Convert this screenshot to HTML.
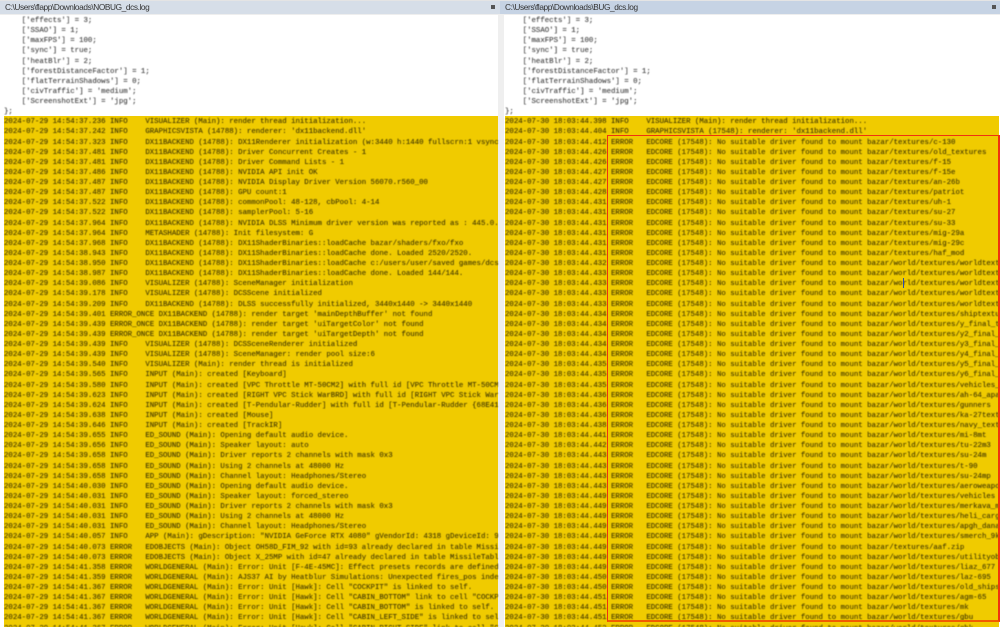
<!DOCTYPE html>
<html><head><meta charset="utf-8"><style>
html,body{margin:0;padding:0;background:#fff;width:1000px;height:627px;overflow:hidden}
.a{position:absolute}
.tb{top:1px;height:13px;font:8.3px/13px "Liberation Sans",sans-serif;letter-spacing:-.4px;color:#333;white-space:pre;padding-left:5px;box-sizing:border-box}
pre{position:absolute;margin:0;top:14px;padding-top:2px;font:7.37px/10.13px "Liberation Mono",monospace;color:#3d3400;-webkit-text-stroke:.1px #3d3400;overflow:hidden;height:611px;filter:blur(.4px)}
.w{color:#3a3a3a;-webkit-text-stroke:.1px #3a3a3a}
</style></head><body>
<div class="a" style="left:0;top:0;width:1000px;height:1px;background:#e4e4e4"></div>
<div class="a tb" style="left:0;width:500px;background:#d6dee8">C:\Users\flapp\Downloads\NOBUG_dcs.log</div>
<div class="a tb" style="left:500px;width:500px;background:#c6d3e4">C:\Users\flapp\Downloads\BUG_dcs.log</div>
<div class="a" style="left:491px;top:5px;width:4px;height:4px;background:#555"></div>
<div class="a" style="left:992px;top:5px;width:4px;height:4px;background:#555"></div>
<div class="a" style="left:498px;top:14px;width:6px;height:613px;background:#efefef"></div>
<div class="a" style="left:0;top:14px;width:1000px;height:1px;background:#eee"></div>
<div class="a" style="left:4px;top:116px;width:494px;height:511px;background:#f0cb00"></div>
<div class="a" style="left:505px;top:116px;width:494px;height:511px;background:#f0cb00"></div>
<pre style="left:4px;width:494px"><span class="w">    ['effects'] = 3;
    ['SSAO'] = 1;
    ['maxFPS'] = 100;
    ['sync'] = true;
    ['heatBlr'] = 2;
    ['forestDistanceFactor'] = 1;
    ['flatTerrainShadows'] = 0;
    ['civTraffic'] = 'medium';
    ['ScreenshotExt'] = 'jpg';
};</span>
2024-07-29 14:54:37.236 INFO    VISUALIZER (Main): render thread initialization...
2024-07-29 14:54:37.242 INFO    GRAPHICSVISTA (14788): renderer: 'dx11backend.dll'
2024-07-29 14:54:37.323 INFO    DX11BACKEND (14788): DX11Renderer initialization (w:3440 h:1440 fullscrn:1 vsync:0
2024-07-29 14:54:37.481 INFO    DX11BACKEND (14788): Driver Concurrent Creates - 1
2024-07-29 14:54:37.481 INFO    DX11BACKEND (14788): Driver Command Lists - 1
2024-07-29 14:54:37.486 INFO    DX11BACKEND (14788): NVIDIA API init OK
2024-07-29 14:54:37.487 INFO    DX11BACKEND (14788): NVIDIA Display Driver Version 56070.r560_00
2024-07-29 14:54:37.487 INFO    DX11BACKEND (14788): GPU count:1
2024-07-29 14:54:37.522 INFO    DX11BACKEND (14788): commonPool: 48-128, cbPool: 4-14
2024-07-29 14:54:37.522 INFO    DX11BACKEND (14788): samplerPool: 5-16
2024-07-29 14:54:37.964 INFO    DX11BACKEND (14788): NVIDIA DLSS Minimum driver version was reported as : 445.0.0
2024-07-29 14:54:37.964 INFO    METASHADER (14788): Init filesystem: G
2024-07-29 14:54:37.968 INFO    DX11BACKEND (14788): DX11ShaderBinaries::loadCache bazar/shaders/fxo/fxo
2024-07-29 14:54:38.943 INFO    DX11BACKEND (14788): DX11ShaderBinaries::loadCache done. Loaded 2520/2520.
2024-07-29 14:54:38.950 INFO    DX11BACKEND (14788): DX11ShaderBinaries::loadCache c:/users/user/saved games/dcs/fxo
2024-07-29 14:54:38.987 INFO    DX11BACKEND (14788): DX11ShaderBinaries::loadCache done. Loaded 144/144.
2024-07-29 14:54:39.086 INFO    VISUALIZER (14788): SceneManager initialization
2024-07-29 14:54:39.178 INFO    VISUALIZER (14788): DCSScene initialized
2024-07-29 14:54:39.209 INFO    DX11BACKEND (14788): DLSS successfully initialized, 3440x1440 -> 3440x1440
2024-07-29 14:54:39.401 ERROR_ONCE DX11BACKEND (14788): render target 'mainDepthBuffer' not found
2024-07-29 14:54:39.439 ERROR_ONCE DX11BACKEND (14788): render target 'uiTargetColor' not found
2024-07-29 14:54:39.439 ERROR_ONCE DX11BACKEND (14788): render target 'uiTargetDepth' not found
2024-07-29 14:54:39.439 INFO    VISUALIZER (14788): DCSSceneRenderer initialized
2024-07-29 14:54:39.439 INFO    VISUALIZER (14788): SceneManager: render pool size:6
2024-07-29 14:54:39.540 INFO    VISUALIZER (Main): render thread is initialized
2024-07-29 14:54:39.565 INFO    INPUT (Main): created [Keyboard]
2024-07-29 14:54:39.580 INFO    INPUT (Main): created [VPC Throttle MT-50CM2] with full id [VPC Throttle MT-50CM2 {
2024-07-29 14:54:39.623 INFO    INPUT (Main): created [RIGHT VPC Stick WarBRD] with full id [RIGHT VPC Stick WarBRD {
2024-07-29 14:54:39.624 INFO    INPUT (Main): created [T-Pendular-Rudder] with full id [T-Pendular-Rudder {68E41
2024-07-29 14:54:39.638 INFO    INPUT (Main): created [Mouse]
2024-07-29 14:54:39.646 INFO    INPUT (Main): created [TrackIR]
2024-07-29 14:54:39.655 INFO    ED_SOUND (Main): Opening default audio device.
2024-07-29 14:54:39.656 INFO    ED_SOUND (Main): Speaker layout: auto
2024-07-29 14:54:39.658 INFO    ED_SOUND (Main): Driver reports 2 channels with mask 0x3
2024-07-29 14:54:39.658 INFO    ED_SOUND (Main): Using 2 channels at 48000 Hz
2024-07-29 14:54:39.658 INFO    ED_SOUND (Main): Channel layout: Headphones/Stereo
2024-07-29 14:54:40.030 INFO    ED_SOUND (Main): Opening default audio device.
2024-07-29 14:54:40.031 INFO    ED_SOUND (Main): Speaker layout: forced_stereo
2024-07-29 14:54:40.031 INFO    ED_SOUND (Main): Driver reports 2 channels with mask 0x3
2024-07-29 14:54:40.031 INFO    ED_SOUND (Main): Using 2 channels at 48000 Hz
2024-07-29 14:54:40.031 INFO    ED_SOUND (Main): Channel layout: Headphones/Stereo
2024-07-29 14:54:40.057 INFO    APP (Main): gDescription: "NVIDIA GeForce RTX 4080" gVendorId: 4318 gDeviceId: 9
2024-07-29 14:54:40.073 ERROR   EDOBJECTS (Main): Object OH58D_FIM_92 with id=93 already declared in table MissileTable
2024-07-29 14:54:40.073 ERROR   EDOBJECTS (Main): Object X_25MP with id=47 already declared in table MissileTable
2024-07-29 14:54:41.358 ERROR   WORLDGENERAL (Main): Error: Unit [F-4E-45MC]: Effect presets records are defined
2024-07-29 14:54:41.359 ERROR   WORLDGENERAL (Main): AJS37 AI by Heatblur Simulations: Unexpected fires_pos index
2024-07-29 14:54:41.367 ERROR   WORLDGENERAL (Main): Error: Unit [Hawk]: Cell "COCKPIT" is linked to self.
2024-07-29 14:54:41.367 ERROR   WORLDGENERAL (Main): Error: Unit [Hawk]: Cell "CABIN_BOTTOM" link to cell "COCKPIT"
2024-07-29 14:54:41.367 ERROR   WORLDGENERAL (Main): Error: Unit [Hawk]: Cell "CABIN_BOTTOM" is linked to self.
2024-07-29 14:54:41.367 ERROR   WORLDGENERAL (Main): Error: Unit [Hawk]: Cell "CABIN_LEFT_SIDE" is linked to self.
2024-07-29 14:54:41.367 ERROR   WORLDGENERAL (Main): Error: Unit [Hawk]: Cell "CABIN_RIGHT_SIDE" link to cell "COCKPIT"</pre>
<pre style="left:505px;width:494px"><span class="w">    ['effects'] = 3;
    ['SSAO'] = 1;
    ['maxFPS'] = 100;
    ['sync'] = true;
    ['heatBlr'] = 2;
    ['forestDistanceFactor'] = 1;
    ['flatTerrainShadows'] = 0;
    ['civTraffic'] = 'medium';
    ['ScreenshotExt'] = 'jpg';
};</span>
2024-07-30 18:03:44.398 INFO    VISUALIZER (Main): render thread initialization...
2024-07-30 18:03:44.404 INFO    GRAPHICSVISTA (17548): renderer: 'dx11backend.dll'
2024-07-30 18:03:44.412 ERROR   EDCORE (17548): No suitable driver found to mount bazar/textures/c-130
2024-07-30 18:03:44.426 ERROR   EDCORE (17548): No suitable driver found to mount bazar/textures/old_textures
2024-07-30 18:03:44.426 ERROR   EDCORE (17548): No suitable driver found to mount bazar/textures/f-15
2024-07-30 18:03:44.427 ERROR   EDCORE (17548): No suitable driver found to mount bazar/textures/f-15e
2024-07-30 18:03:44.427 ERROR   EDCORE (17548): No suitable driver found to mount bazar/textures/an-26b
2024-07-30 18:03:44.428 ERROR   EDCORE (17548): No suitable driver found to mount bazar/textures/patriot
2024-07-30 18:03:44.431 ERROR   EDCORE (17548): No suitable driver found to mount bazar/textures/uh-1
2024-07-30 18:03:44.431 ERROR   EDCORE (17548): No suitable driver found to mount bazar/textures/su-27
2024-07-30 18:03:44.431 ERROR   EDCORE (17548): No suitable driver found to mount bazar/textures/su-33
2024-07-30 18:03:44.431 ERROR   EDCORE (17548): No suitable driver found to mount bazar/textures/mig-29a
2024-07-30 18:03:44.431 ERROR   EDCORE (17548): No suitable driver found to mount bazar/textures/mig-29c
2024-07-30 18:03:44.431 ERROR   EDCORE (17548): No suitable driver found to mount bazar/textures/haf_mod
2024-07-30 18:03:44.432 ERROR   EDCORE (17548): No suitable driver found to mount bazar/world/textures/worldtextures
2024-07-30 18:03:44.433 ERROR   EDCORE (17548): No suitable driver found to mount bazar/world/textures/worldtextures
2024-07-30 18:03:44.433 ERROR   EDCORE (17548): No suitable driver found to mount bazar/world/textures/worldtextures
2024-07-30 18:03:44.433 ERROR   EDCORE (17548): No suitable driver found to mount bazar/world/textures/worldtextures
2024-07-30 18:03:44.433 ERROR   EDCORE (17548): No suitable driver found to mount bazar/world/textures/worldtextures
2024-07-30 18:03:44.434 ERROR   EDCORE (17548): No suitable driver found to mount bazar/world/textures/shiptextures
2024-07-30 18:03:44.434 ERROR   EDCORE (17548): No suitable driver found to mount bazar/world/textures/y_final_textures
2024-07-30 18:03:44.434 ERROR   EDCORE (17548): No suitable driver found to mount bazar/world/textures/y2_final_textures
2024-07-30 18:03:44.434 ERROR   EDCORE (17548): No suitable driver found to mount bazar/world/textures/y3_final_textures
2024-07-30 18:03:44.434 ERROR   EDCORE (17548): No suitable driver found to mount bazar/world/textures/y4_final_textures
2024-07-30 18:03:44.435 ERROR   EDCORE (17548): No suitable driver found to mount bazar/world/textures/y5_final_textures
2024-07-30 18:03:44.435 ERROR   EDCORE (17548): No suitable driver found to mount bazar/world/textures/y6_final_textures
2024-07-30 18:03:44.435 ERROR   EDCORE (17548): No suitable driver found to mount bazar/world/textures/vehicles_textures
2024-07-30 18:03:44.436 ERROR   EDCORE (17548): No suitable driver found to mount bazar/world/textures/ah-64_apache
2024-07-30 18:03:44.436 ERROR   EDCORE (17548): No suitable driver found to mount bazar/world/textures/gunners
2024-07-30 18:03:44.436 ERROR   EDCORE (17548): No suitable driver found to mount bazar/world/textures/ka-27textures
2024-07-30 18:03:44.438 ERROR   EDCORE (17548): No suitable driver found to mount bazar/world/textures/navy_textures
2024-07-30 18:03:44.441 ERROR   EDCORE (17548): No suitable driver found to mount bazar/world/textures/mi-8mt
2024-07-30 18:03:44.442 ERROR   EDCORE (17548): No suitable driver found to mount bazar/world/textures/tu-22m3
2024-07-30 18:03:44.443 ERROR   EDCORE (17548): No suitable driver found to mount bazar/world/textures/su-24m
2024-07-30 18:03:44.443 ERROR   EDCORE (17548): No suitable driver found to mount bazar/world/textures/t-90
2024-07-30 18:03:44.443 ERROR   EDCORE (17548): No suitable driver found to mount bazar/world/textures/su-24mp
2024-07-30 18:03:44.443 ERROR   EDCORE (17548): No suitable driver found to mount bazar/world/textures/aeroweapons
2024-07-30 18:03:44.449 ERROR   EDCORE (17548): No suitable driver found to mount bazar/world/textures/vehicles
2024-07-30 18:03:44.449 ERROR   EDCORE (17548): No suitable driver found to mount bazar/world/textures/merkava_mk4
2024-07-30 18:03:44.449 ERROR   EDCORE (17548): No suitable driver found to mount bazar/world/textures/heli_cargo
2024-07-30 18:03:44.449 ERROR   EDCORE (17548): No suitable driver found to mount bazar/world/textures/apgh_dana
2024-07-30 18:03:44.449 ERROR   EDCORE (17548): No suitable driver found to mount bazar/world/textures/smerch_9k58
2024-07-30 18:03:44.449 ERROR   EDCORE (17548): No suitable driver found to mount bazar/textures/aaf.zip
2024-07-30 18:03:44.449 ERROR   EDCORE (17548): No suitable driver found to mount bazar/world/textures/utilityobjects
2024-07-30 18:03:44.449 ERROR   EDCORE (17548): No suitable driver found to mount bazar/world/textures/liaz_677
2024-07-30 18:03:44.450 ERROR   EDCORE (17548): No suitable driver found to mount bazar/world/textures/laz-695
2024-07-30 18:03:44.450 ERROR   EDCORE (17548): No suitable driver found to mount bazar/world/textures/old_ships
2024-07-30 18:03:44.451 ERROR   EDCORE (17548): No suitable driver found to mount bazar/world/textures/agm-65
2024-07-30 18:03:44.451 ERROR   EDCORE (17548): No suitable driver found to mount bazar/world/textures/mk
2024-07-30 18:03:44.451 ERROR   EDCORE (17548): No suitable driver found to mount bazar/world/textures/gbu
2024-07-30 18:03:44.452 ERROR   EDCORE (17548): No suitable driver found to mount bazar/world/textures/gbk</pre>
<div class="a" style="left:607px;top:135px;width:393px;height:487px;box-sizing:border-box;border:1px solid #f03210;border-bottom:2px solid #f25c00;border-right-width:2px"></div>
<div class="a" style="left:903px;top:278px;width:1.2px;height:10px;background:#2a4bb0"></div>
</body></html>
